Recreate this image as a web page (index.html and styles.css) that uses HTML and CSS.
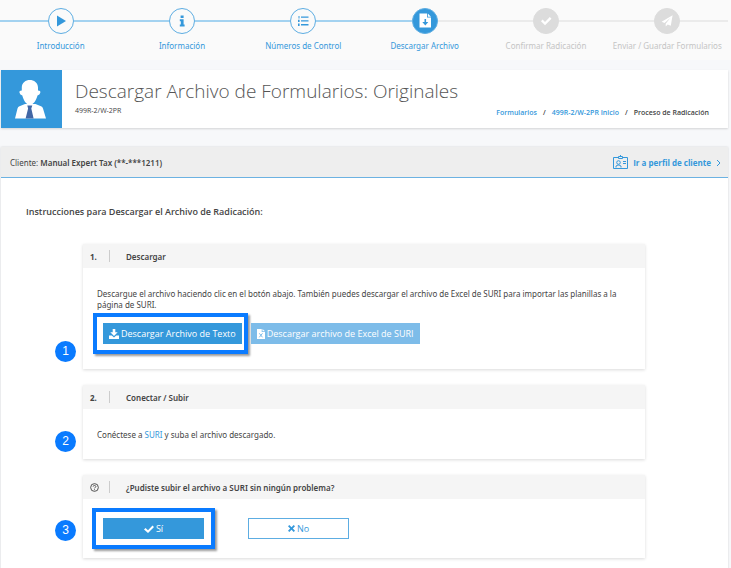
FILE: index.html
```html
<!DOCTYPE html>
<html lang="es">
<head>
<meta charset="utf-8">
<meta name="viewport" content="width=device-width, initial-scale=1">
<title>Descargar Archivo de Formularios</title>
<link rel="stylesheet" href="styles.css">
</head>
<body>
<nav class="steps" aria-label="Progreso">
  <ol class="steps-list">
    <li class="step">
      <span class="dot"><svg viewBox="0 0 24 24" aria-hidden="true"><path d="M8 6.500v11l9-5.500z"/></svg></span>
      <a class="step-label" href="#">Introducción</a>
    </li>
    <li class="step">
      <span class="dot"><svg viewBox="0 0 24 24" aria-hidden="true"><path d="M10.600 6.500h3v2.500h-3zM9.800 10.200h3.800v5.300h1v2H9.800v-2h1v-3.300h-1z"/></svg></span>
      <a class="step-label" href="#">Información</a>
    </li>
    <li class="step">
      <span class="dot"><svg viewBox="0 0 24 24" aria-hidden="true"><path d="M10 7.500h7.500v1.300H10zM10 11.300h7.500v1.300H10zM10 15.100h7.500v1.300H10zM7.500 7h1v2.500h-1zM7 10.700h1.600v2.400H7zM7 14.600h1.600V17H7z"/></svg></span>
      <a class="step-label" href="#">Números de Control</a>
    </li>
    <li class="step current" aria-current="step">
      <span class="dot"><svg viewBox="0 0 24 24" aria-hidden="true"><path d="M6.500 4.500H14V8.500h4V18.500H6.500z"/><path d="M14.800 4.500L18 7.700h-3.200z"/><path class="cut" d="M11.500 10h1.600v3h2.200l-3 3.400-3-3.400h2.200z"/></svg></span>
      <a class="step-label" href="#">Descargar Archivo</a>
    </li>
    <li class="step pending">
      <span class="dot"><svg viewBox="0 0 24 24" aria-hidden="true"><path d="M7 12.200l1.600-1.600 2.400 2.300 4.800-4.800 1.700 1.600-6.500 6.500z"/></svg></span>
      <span class="step-label">Confirmar Radicación</span>
    </li>
    <li class="step pending">
      <span class="dot"><svg viewBox="0 0 24 24" aria-hidden="true"><path d="M17.600 6.300L6.600 12.800l2.900 1.300 6-5.400-4.800 6v2.900l2-2.200 3.100 1.300z"/></svg></span>
      <span class="step-label">Enviar / Guardar Formularios</span>
    </li>
  </ol>
</nav>

<header class="title-card">
  <svg class="avatar" viewBox="0 0 61 58" aria-hidden="true">
    <path class="fig" d="M14 48.500l2.500-10q.5-1.800 2-2.300l5.500-2.200h10.500l5.500 2.200q1.500.5 2 2.300l3 10z"/>
    <path class="tie" d="M26.300 35.500h5l-1 3 2.300 10h-8l2.500-10z"/>
    <path class="fig" d="M20.800 17.500c0-5 4-7.500 8-7.500s8.200 2.500 8.200 7.500v3q2.800 0 2.300 2.200-.5 2.300-2.800 2.800c-1.200 5-4.500 9.500-7.700 9.500s-6.300-4.500-7.500-9.500q-2.300-.5-2.800-2.800-.5-2.200 2.300-2.200z"/>
  </svg>
  <div class="title-body">
    <div class="title-text">
      <h1>Descargar Archivo de Formularios: Originales</h1>
      <p class="form-code">499R-2/W-2PR</p>
    </div>
    <nav class="crumbs" aria-label="Ruta">
      <a href="#">Formularios</a><span>/</span><a href="#">499R-2/W-2PR Inicio</a><span>/</span><span>Proceso de Radicación</span>
    </nav>
  </div>
</header>

<main class="panel">
  <div class="client-bar">
    <p>Cliente: <b>Manual Expert Tax (**-***1211)</b></p>
    <a class="profile" href="#">
      <svg class="badge-icon" viewBox="0 0 15 15" aria-hidden="true"><path d="M5.500 2.500H.5v11h14v-11h-5M5.500 1.500h4v2h-4zM7.500 0v2M3 12.500v-1.500l2-1h1l2 1v1.500M10 6.500h3M10 8.500h3"/><circle cx="5.500" cy="7.500" r="1.800"/></svg>
      Ir a perfil de cliente
      <svg class="chevron" viewBox="0 0 5 8" aria-hidden="true"><path d="M1 1l3 3-3 3"/></svg>
    </a>
  </div>
  <div class="content">
    <h2>Instrucciones para Descargar el Archivo de Radicación:</h2>

    <section class="card">
      <span class="marker">1</span>
      <h3><span class="num">1.</span>Descargar</h3>
      <div class="card-body">
        <p>Descargue el archivo haciendo clic en el botón abajo. También puedes descargar el archivo de Excel de SURI para importar las planillas a la página de SURI.</p>
        <div class="actions">
          <span class="highlight"><button class="btn" type="button"><svg viewBox="0 0 10 10" aria-hidden="true"><path d="M3.700 0h2.600v3.300h2.400L5 7 1.300 3.300h2.400zM0 6.600h2.800L5 8.500l2.200-1.900H10V10H0z"/></svg>Descargar Archivo de Texto</button></span>
          <button class="btn faded" type="button"><svg class="file" viewBox="0 0 8 10" aria-hidden="true"><path d="M0 0h4.700v3H8v7H0zM5.500 0L8 2.300H5.500z"/><path class="x" d="M2.300 4.300l3.200 4M5.500 4.300l-3.200 4"/></svg>Descargar archivo de Excel de SURI</button>
        </div>
      </div>
    </section>

    <section class="card">
      <span class="marker">2</span>
      <h3><span class="num">2.</span>Conectar / Subir</h3>
      <div class="card-body">
        <p>Conéctese a <a href="#">SURI</a> y suba el archivo descargado.</p>
      </div>
    </section>

    <section class="card">
      <span class="marker marker-high">3</span>
      <h3><span class="num"><svg class="help" viewBox="0 0 10 10" aria-hidden="true"><circle cx="5" cy="5" r="4.300"/><path d="M3.500 4c0-1.800 3-1.700 3 0C6.500 5 5 5 5 6M5 7v1"/></svg></span>¿Pudiste subir el archivo a SURI sin ningún problema?</h3>
      <div class="card-body answers">
        <span class="highlight even"><button class="btn wide" type="button"><svg viewBox="0 0 10 10" aria-hidden="true"><path d="M0 5.400l1.500-1.500L4 6.300 8.500 1.500 10 3 4 9z"/></svg>Sí</button></span>
        <button class="btn wide outline" type="button"><svg class="small" viewBox="0 0 8 8" aria-hidden="true"><path d="M1.500 0L4 2.500 6.500 0 8 1.500 5.500 4 8 6.500 6.500 8 4 5.500 1.500 8 0 6.500 2.500 4 0 1.500z"/></svg>No</button>
      </div>
    </section>
  </div>
</main>
</body>
</html>
```
FILE: styles.css
```css
* { box-sizing: border-box; }
body {
  margin: 0;
  padding: 0 3px 0 1px;
  background: #f7f8fa;
  color: #444;
  font: 8px/11px "Noto Sans", "Open Sans", sans-serif;
  overflow: hidden;
}
h1, h2, h3, p, ol { margin: 0; padding: 0; }
a { color: #3498db; text-decoration: none; }

.steps { background: #fafafa; height: 60px; margin: 0 -3px 0 -1px; padding: 8px 3px 0 0; }
.steps-list { display: flex; list-style: none; }
.step {
  flex: 1 1 0;
  display: flex;
  flex-direction: column;
  align-items: center;
  gap: 6px;
  color: #3498db;
  white-space: nowrap;
}
.step .step-label { color: inherit; }
.dot {
  width: 100%;
  display: flex;
  align-items: center;
}
.dot::before, .dot::after { content: ""; flex: 1; height: 2px; background: #a3d2f0; }
.dot svg {
  width: 26px;
  height: 26px;
  border: 1px solid #5dade2;
  border-radius: 50%;
  fill: #3498db;
}
.current .dot svg { background: #3498db; fill: #fff; }
.current .dot svg .cut { fill: #3498db; }
.current .dot::after, .pending .dot::before, .pending .dot::after { background: #ebebeb; }
.pending { color: #c4c4c4; }
.pending .dot svg { background: #dcdcdc; border-color: #dcdcdc; fill: #fff; }

.title-card {
  display: flex;
  height: 58px;
  margin-top: 10px;
  background: #fff;
  box-shadow: 0 1px 2px rgba(0, 0, 0, .15);
  font-family: "Open Sans", sans-serif;
}
.avatar { width: 61px; height: 58px; background: #3498db; }
.avatar .fig { fill: #fff; }
.avatar .tie { fill: #4267a5; }
.title-body { flex: 1; display: flex; justify-content: space-between; padding: 8px 19px 0 13px; }
h1 { font-size: 19px; line-height: 26px; font-weight: 300; white-space: nowrap; color: #555; }
.form-code { font-size: 7px; line-height: 13px; }
.crumbs {
  display: flex;
  gap: 6px;
  align-self: flex-start;
  margin: 29px 0 0 -100px;
  font-size: 7px;
  font-weight: 600;
  white-space: nowrap;
}

.panel { margin-top: 19px; background: #fff; box-shadow: 0 0 2px rgba(0, 0, 0, .15); }
.client-bar {
  display: flex;
  align-items: center;
  justify-content: space-between;
  height: 31px;
  padding: 1px 7px 0 9px;
  background: #eee;
  border-bottom: 1px solid #6cb2e2;
}
.client-bar b { font-weight: 600; }
.profile { display: flex; align-items: center; gap: 5px; font-family: "Open Sans", sans-serif; font-weight: 700; }
.profile svg { fill: none; stroke: #3498db; }
.badge-icon { width: 15px; height: 15px; }
.chevron { width: 5px; height: 8px; }

.content { padding: 28px 83px 9px 82px; }
h2 { margin: 0 0 26px -57px; font: 600 9px/12px "Open Sans", sans-serif; }
.card {
  position: relative;
  margin-bottom: 16px;
  background: #fff;
  box-shadow: 0 1px 3px rgba(0, 0, 0, .15);
}
h3 {
  display: flex;
  align-items: center;
  height: 24px;
  padding-left: 7px;
  background: #f5f5f5;
  font-size: 8px;
  font-weight: 600;
}
.num {
  display: flex;
  align-items: center;
  width: 20px;
  height: 12px;
  margin-right: 16px;
  border-right: 1px solid #ccc;
  font-weight: 700;
}
.help { width: 9px; height: 9px; fill: none; stroke: #444; }
.card-body { padding: 20px 13px 19px 14px; }
.actions { display: flex; align-items: center; gap: 3px; margin: 3px 0 -4px -4px; }
.highlight {
  padding: 6px 2px 6px 6px;
  border: 4px solid #0a7bff;
  box-shadow: 2px 2px 2px rgba(0, 0, 0, .4);
}
.even { padding: 6px 7px; }
.btn {
  display: flex;
  align-items: center;
  justify-content: center;
  gap: 2px;
  height: 21px;
  padding: 0 6px;
  border: 0;
  background: #3498db;
  color: #fff;
  font: 500 9px/12px "Open Sans", sans-serif;
  white-space: nowrap;
}
.btn svg { width: 10px; height: 10px; fill: currentColor; }
.btn .file { width: 8px; }
.btn .small { width: 7px; height: 7px; }
.faded { background: #7dbce9; }
.faded .x { stroke: #7dbce9; }
.wide { width: 101px; }
.outline { background: #fff; border: 1px solid #5dade2; color: #3498db; }
.answers { display: flex; align-items: center; gap: 33px; padding: 9px; }
.marker {
  position: absolute;
  left: -28px;
  bottom: 7px;
  width: 21px;
  height: 21px;
  border-radius: 50%;
  background: #0a7bff;
  color: #fff;
  font: 12px/21px "Liberation Sans", sans-serif;
  text-align: center;
}
.marker-high { bottom: 17px; }
```
